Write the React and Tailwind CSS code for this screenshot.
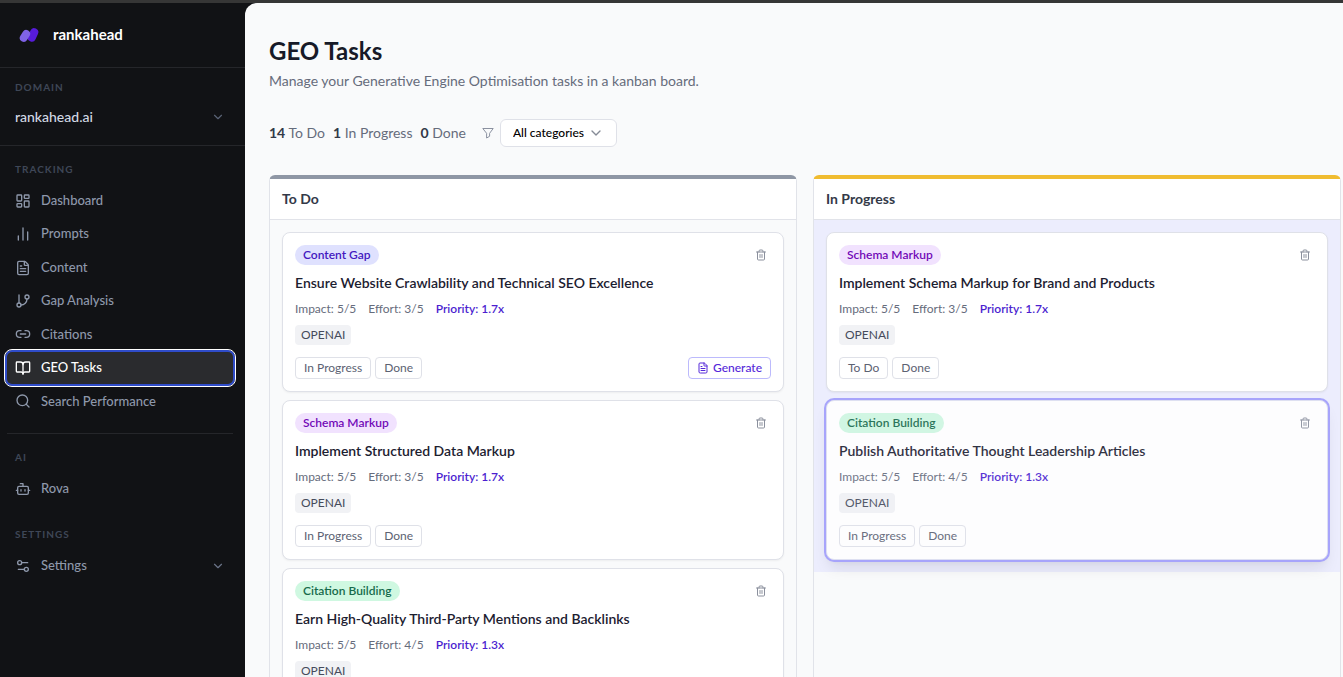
import React, { useState } from "react";
import {
  LayoutDashboard,
  ChartNoAxesColumn,
  FileText,
  GitBranch,
  Link2,
  BookOpen,
  Search,
  Bot,
  Settings2,
  ChevronDown,
  Trash2,
} from "lucide-react";

const trackingLinks = [
  { label: "Dashboard", icon: LayoutDashboard },
  { label: "Prompts", icon: ChartNoAxesColumn },
  { label: "Content", icon: FileText },
  { label: "Gap Analysis", icon: GitBranch },
  { label: "Citations", icon: Link2 },
  { label: "GEO Tasks", icon: BookOpen, active: true },
  { label: "Search Performance", icon: Search },
];

const badgeStyles = {
  "Content Gap": "bg-[#dfe1fe] text-[#4318c0]",
  "Schema Markup": "bg-[#f1e2fe] text-[#7209b7]",
  "Citation Building": "bg-[#cff8e1] text-[#166a4b]",
};

const todoTasks = [
  { category: "Content Gap", title: "Ensure Website Crawlability and Technical SEO Excellence", effort: 3, priority: "1.7x", moves: ["In Progress", "Done"], generate: true },
  { category: "Schema Markup", title: "Implement Structured Data Markup", effort: 3, priority: "1.7x", moves: ["In Progress", "Done"] },
  { category: "Citation Building", title: "Earn High-Quality Third-Party Mentions and Backlinks", effort: 4, priority: "1.3x", moves: ["In Progress", "Done"] },
];

const progressTasks = [
  { category: "Schema Markup", title: "Implement Schema Markup for Brand and Products", effort: 3, priority: "1.7x", moves: ["To Do", "Done"] },
  { category: "Citation Building", title: "Publish Authoritative Thought Leadership Articles", effort: 4, priority: "1.3x", moves: ["In Progress", "Done"], dragging: true },
];

function Logo() {
  return (
    <svg viewBox="0 0 20 18" className="w-5 h-[18px]" aria-hidden="true">
      <path d="M15.2 7.3 L12.8 12.6" stroke="#571bdb" strokeWidth="8.2" strokeLinecap="round" />
      <path d="M7.2 8.9 L4.7 12.9" stroke="#7f63e6" strokeWidth="7.8" strokeLinecap="round" />
    </svg>
  );
}

/* ================= Sidebar ================= */
function NavLink({ label, icon: Icon, active, children }) {
  return (
    <a
      href="#"
      aria-current={active ? "page" : undefined}
      className={
        active
          ? "flex items-center self-center gap-[10px] h-8 px-2 rounded-[5px] bg-[#2a2b2e] text-white ring-2 ring-[#2f4cc9] outline outline-1 outline-offset-2 outline-white"
          : "flex items-center gap-[10px] min-h-[33px] px-2 rounded-[5px] text-[#8e98ab]"
      }
    >
      <Icon className="w-4 h-4" strokeWidth={2} />
      <span>{label}</span>
      {children}
    </a>
  );
}

function SectionLabel({ children }) {
  return <h2 className="px-2 text-[10px] leading-4 font-bold tracking-[1px] text-[#3f4757]">{children}</h2>;
}

function Sidebar() {
  return (
    <aside className="w-[245px] shrink-0 text-[13px] font-medium">
      <div className="flex items-center gap-[14px] h-[65px] pl-[19px] pb-[2px] border-b border-[#25262a]">
        <Logo />
        <span className="text-[15px] font-bold text-white">rankahead</span>
      </div>

      <div className="h-[78px] pt-[11px] pl-[7px] pr-3 border-b border-[#25262a]">
        <SectionLabel>DOMAIN</SectionLabel>
        <div className="relative mt-[10px]">
          <select aria-label="Domain" className="appearance-none w-full h-6 px-2 bg-transparent text-sm text-[#d3dae5]">
            <option>rankahead.ai</option>
          </select>
          <ChevronDown className="absolute right-[7px] top-1 w-4 h-4 p-px text-[#5a6375] pointer-events-none" />
        </div>
      </div>

      <nav className="pl-[7px] pr-3 pt-[15px]">
        <SectionLabel>TRACKING</SectionLabel>
        <div className="grid auto-rows-fr h-[234px] mt-[7px]">
          {trackingLinks.map((link) => (
            <NavLink key={link.label} {...link} />
          ))}
        </div>

        <div className="mt-[15px] pt-[15px] border-t border-[#25262a]">
          <SectionLabel>AI</SectionLabel>
          <div className="mt-[7px]">
            <NavLink label="Rova" icon={Bot} />
          </div>
        </div>

        <div className="mt-[21px]">
          <SectionLabel>SETTINGS</SectionLabel>
          <div className="mt-[7px]">
            <NavLink label="Settings" icon={Settings2}>
              <ChevronDown className="-mr-px ml-auto w-4 h-4 p-px text-[#6b7488]" />
            </NavLink>
          </div>
        </div>
      </nav>
    </aside>
  );
}

/* ================= Task card ================= */
function TaskCard({ task }) {
  return (
    <article
      className={
        task.dragging
          ? "p-3 rounded-lg border border-[#dddff0] bg-white text-xs leading-4 opacity-90 ring-2 ring-[#a09dfb] shadow-lg"
          : "p-3 rounded-lg border border-[#dfe1e8] bg-white text-xs leading-4 shadow-xs"
      }
    >
      <div className="flex items-center justify-between">
        <span className={`h-5 px-2 rounded-full font-semibold leading-5 ${badgeStyles[task.category]}`}>{task.category}</span>
        <button type="button" aria-label="Delete task" className="p-1 text-[#8b909d]">
          <Trash2 className="w-3 h-3" />
        </button>
      </div>

      <h3 className="mt-2 text-sm leading-5 font-semibold text-[#1c2030]">{task.title}</h3>

      <div className="flex gap-3 mt-2 text-[#666c7c]">
        <span>Impact: 5/5</span>
        <span>Effort: {task.effort}/5</span>
        <span className="font-semibold text-[#4c1fd0]">Priority: {task.priority}</span>
      </div>

      <div className="flex mt-2">
        <span className="h-5 px-[6px] rounded bg-[#f1f2f5] leading-5 text-[#454b5b]">OPENAI</span>
      </div>

      <div className="flex gap-1 mt-3">
        {task.moves.map((move) => (
          <button key={move} type="button" className="h-[22px] px-2 rounded border border-[#dfe1e8] text-[#5c6272]">
            {move}
          </button>
        ))}
        {task.generate && (
          <button type="button" className="flex items-center gap-1 h-[22px] px-2 ml-auto rounded border border-[#bcbafc] font-medium text-[#5528d9]">
            <FileText className="w-3 h-3" />
            Generate
          </button>
        )}
      </div>
    </article>
  );
}

function Column({ title, tasks, accent, highlight }) {
  return (
    <section className={`min-w-0 rounded-t-md border-x border-x-[#e1e3e9] border-t-4 ${accent}`}>
      <h2 className="h-[41px] px-3 bg-white border-b border-[#e1e3e9] text-sm leading-10 font-bold text-[#333948]">{title}</h2>
      <div className={highlight ? "flex flex-col gap-2 p-3 bg-[#ecedfd]" : "flex flex-col gap-2 p-3"}>
        {tasks.map((task) => (
          <TaskCard key={task.title} task={task} />
        ))}
      </div>
    </section>
  );
}

/* ================= App ================= */
function App() {
  const [category, setCategory] = useState("All categories");

  return (
    <div className="flex h-screen overflow-hidden border-t-[3px] border-[#363636] bg-[#111215] font-['Lato',sans-serif]">
      <Sidebar />

      <main className="flex flex-col flex-1 min-w-0 pl-6 pr-[2px] pt-8 rounded-tl-xl bg-[#f9fafb] overflow-hidden">
        <h1 className="text-2xl leading-8 font-bold text-[#171a28]">GEO Tasks</h1>
        <p className="mt-1 text-sm leading-5 text-[#666c7c]">
          Manage your Generative Engine Optimisation tasks in a kanban board.
        </p>

        <div className="flex items-center gap-2 mt-7 h-7 shrink-0 text-sm text-[#666c7c]">
          <span><b className="font-bold text-[#333948]">14</b> To Do</span>
          <span><b className="font-bold text-[#333948]">1</b> In Progress</span>
          <span><b className="font-bold text-[#333948]">0</b> Done</span>
          <div className="flex items-center gap-[6px] ml-2">
            <svg viewBox="0 0 12 12" className="w-3 h-3" fill="none" stroke="#8b91a0" strokeLinejoin="round" aria-hidden="true">
              <path d="M.8 1.5h10.4L7.6 6.3v3L4.6 11V6.3z" />
            </svg>
            <div className="relative">
              <select
                aria-label="Category"
                value={category}
                onChange={(e) => setCategory(e.target.value)}
                className="appearance-none w-[117px] h-7 pl-3 rounded-md border border-[#dfe1e8] bg-white text-xs font-medium text-black"
              >
                <option>All categories</option>
                <option>Content Gap</option>
                <option>Schema Markup</option>
                <option>Citation Building</option>
              </select>
              <ChevronDown className="absolute right-[13px] top-[6px] w-4 h-4 text-[#858a96] pointer-events-none" />
            </div>
          </div>
        </div>

        <div className="grid grid-cols-2 gap-4 mt-7 flex-1">
          <Column title="To Do" tasks={todoTasks} accent="border-t-[#8f97a5]" />
          <Column title="In Progress" tasks={progressTasks} accent="border-t-[#f0bc30]" highlight />
        </div>
      </main>
    </div>
  );
}

export default App;
